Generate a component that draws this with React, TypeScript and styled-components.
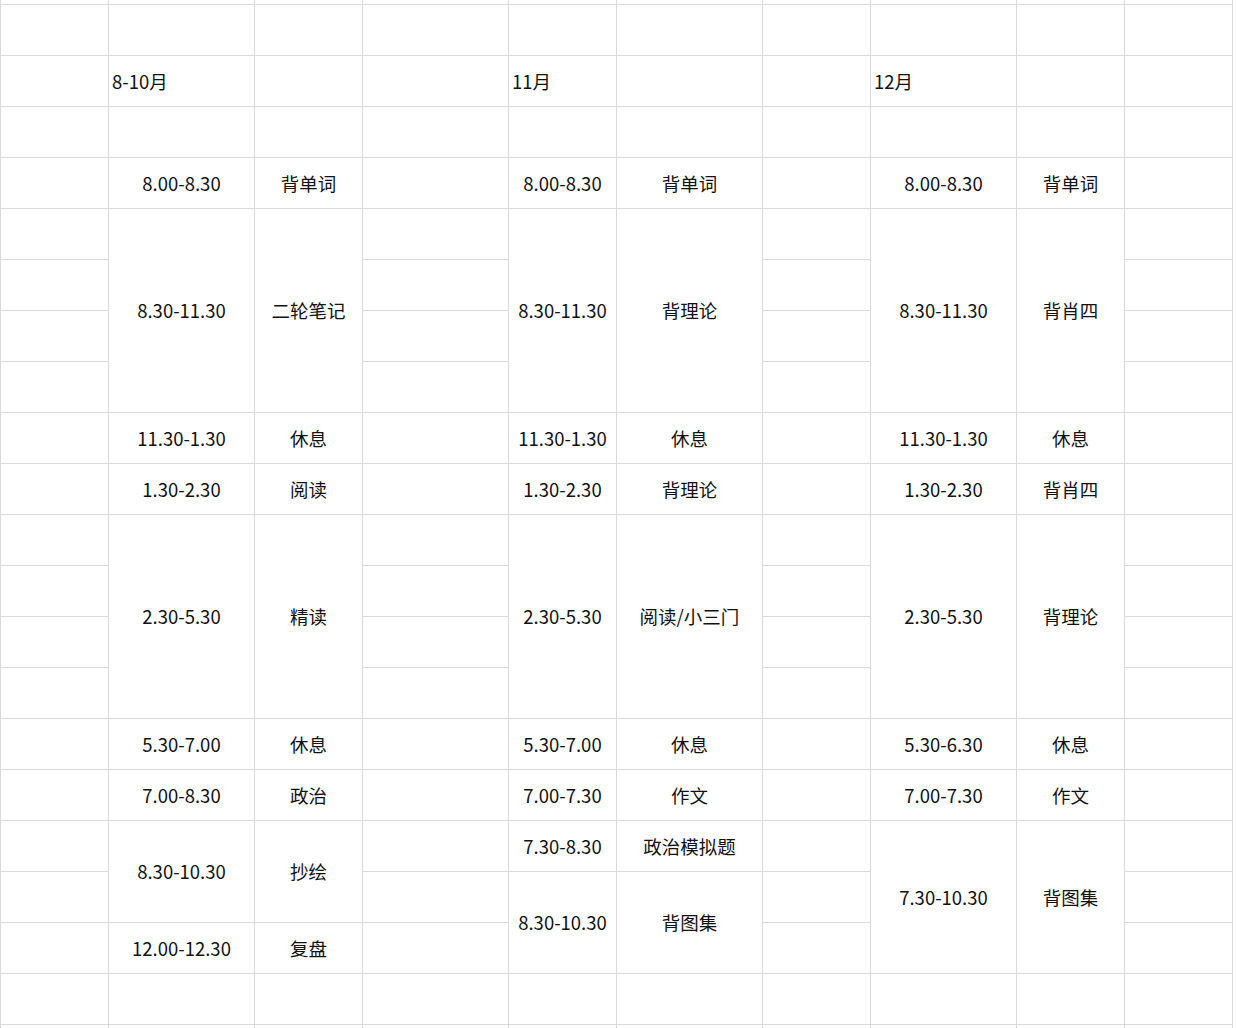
import React from "react";
import styled, { createGlobalStyle } from "styled-components";

const GlobalStyle = createGlobalStyle`
  html, body { margin: 0; padding: 0; background: #ffffff; }
  body { font-family: "Noto Sans CJK SC", "Noto Sans", sans-serif; }
`;

const COLS = [108, 146, 108, 146, 108, 146, 108, 146, 108, 108];
const ROWS = 20;

const Sheet = styled.div`
  display: grid;
  grid-template-columns: ${COLS.map((c) => `${c}px`).join(" ")};
  grid-template-rows: 5px repeat(${ROWS}, 51px) 3px;
  width: ${COLS.reduce((a, b) => a + b, 0)}px;
  border-left: 1px solid #dadada;
  background: #ffffff;
`;

const Cell = styled.div<{ $col: number; $row: number; $span: number; $left?: boolean; $edge?: boolean }>`
  grid-column: ${(p) => p.$col};
  grid-row: ${(p) => p.$row} / span ${(p) => p.$span};
  box-sizing: border-box;
  border-right: 1px solid #dadada;
  border-bottom: ${(p) => (p.$edge ? "none" : "1px solid #dadada")};
  display: flex;
  align-items: center;
  justify-content: ${(p) => (p.$left ? "flex-start" : "center")};
  padding: 0 0 0 ${(p) => (p.$left ? "3px" : "0")};
  font-size: 18.5px;
  line-height: 1;
  color: #111111;
  white-space: nowrap;
  overflow: visible;
`;

type Seg = { r: number; span?: number; text: string; left?: boolean };

const columns: Seg[][] = [
  [],
  [
    { r: 2, text: "8-10月", left: true },
    { r: 4, text: "8.00-8.30" },
    { r: 5, span: 4, text: "8.30-11.30" },
    { r: 9, text: "11.30-1.30" },
    { r: 10, text: "1.30-2.30" },
    { r: 11, span: 4, text: "2.30-5.30" },
    { r: 15, text: "5.30-7.00" },
    { r: 16, text: "7.00-8.30" },
    { r: 17, span: 2, text: "8.30-10.30" },
    { r: 19, text: "12.00-12.30" },
  ],
  [
    { r: 4, text: "背单词" },
    { r: 5, span: 4, text: "二轮笔记" },
    { r: 9, text: "休息" },
    { r: 10, text: "阅读" },
    { r: 11, span: 4, text: "精读" },
    { r: 15, text: "休息" },
    { r: 16, text: "政治" },
    { r: 17, span: 2, text: "抄绘" },
    { r: 19, text: "复盘" },
  ],
  [],
  [
    { r: 2, text: "11月", left: true },
    { r: 4, text: "8.00-8.30" },
    { r: 5, span: 4, text: "8.30-11.30" },
    { r: 9, text: "11.30-1.30" },
    { r: 10, text: "1.30-2.30" },
    { r: 11, span: 4, text: "2.30-5.30" },
    { r: 15, text: "5.30-7.00" },
    { r: 16, text: "7.00-7.30" },
    { r: 17, text: "7.30-8.30" },
    { r: 18, span: 2, text: "8.30-10.30" },
  ],
  [
    { r: 4, text: "背单词" },
    { r: 5, span: 4, text: "背理论" },
    { r: 9, text: "休息" },
    { r: 10, text: "背理论" },
    { r: 11, span: 4, text: "阅读/小三门" },
    { r: 15, text: "休息" },
    { r: 16, text: "作文" },
    { r: 17, text: "政治模拟题" },
    { r: 18, span: 2, text: "背图集" },
  ],
  [],
  [
    { r: 2, text: "12月", left: true },
    { r: 4, text: "8.00-8.30" },
    { r: 5, span: 4, text: "8.30-11.30" },
    { r: 9, text: "11.30-1.30" },
    { r: 10, text: "1.30-2.30" },
    { r: 11, span: 4, text: "2.30-5.30" },
    { r: 15, text: "5.30-6.30" },
    { r: 16, text: "7.00-7.30" },
    { r: 17, span: 3, text: "7.30-10.30" },
  ],
  [
    { r: 4, text: "背单词" },
    { r: 5, span: 4, text: "背肖四" },
    { r: 9, text: "休息" },
    { r: 10, text: "背肖四" },
    { r: 11, span: 4, text: "背理论" },
    { r: 15, text: "休息" },
    { r: 16, text: "作文" },
    { r: 17, span: 3, text: "背图集" },
  ],
  [],
];

function buildColumn(segs: Seg[], colIndex: number) {
  const col = colIndex + 1;
  const out: React.ReactNode[] = [];
  out.push(<Cell key={`${col}-top`} $col={col} $row={1} $span={1} />);
  let r = 1;
  while (r <= ROWS) {
    const seg = segs.find((s) => s.r === r);
    const span = seg?.span ?? 1;
    out.push(
      <Cell key={`${col}-${r}`} $col={col} $row={r + 1} $span={span} $left={seg?.left}>
        {seg?.text ?? ""}
      </Cell>
    );
    r += span;
  }
  out.push(<Cell key={`${col}-bottom`} $col={col} $row={ROWS + 2} $span={1} $edge />);
  return out;
}

export default function App() {
  return (
    <>
      <GlobalStyle />
      <Sheet>{columns.map((segs, i) => buildColumn(segs, i))}</Sheet>
    </>
  );
}
